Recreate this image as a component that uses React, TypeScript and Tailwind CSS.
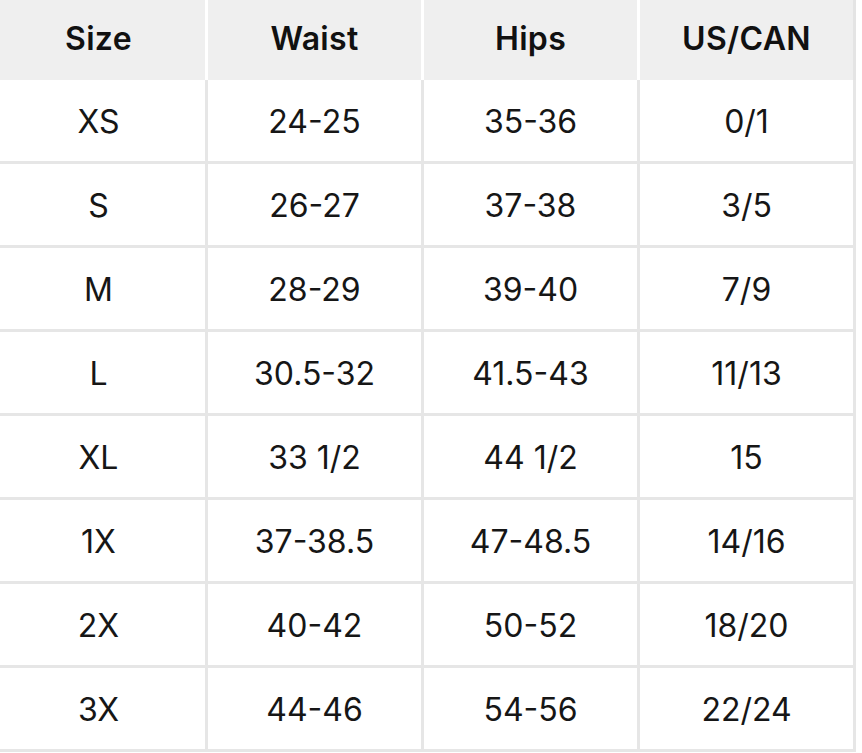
import React from 'react';

const headers = ['Size', 'Waist', 'Hips', 'US/CAN'];

const rows = [
  ['XS', '24-25', '35-36', '0/1'],
  ['S', '26-27', '37-38', '3/5'],
  ['M', '28-29', '39-40', '7/9'],
  ['L', '30.5-32', '41.5-43', '11/13'],
  ['XL', '33 1/2', '44 1/2', '15'],
  ['1X', '37-38.5', '47-48.5', '14/16'],
  ['2X', '40-42', '50-52', '18/20'],
  ['3X', '44-46', '54-56', '22/24'],
];

export default function App() {
  return (
    <div className="min-h-screen bg-white overflow-hidden" style={{ fontFamily: 'Inter, "Noto Sans", sans-serif' }}>
      <div className="-ml-[8px] w-[864px]">
        {/* header */}
        <div className="flex h-[80px] bg-[#efefef]">
          {headers.map((h, i) => (
            <div
              key={h}
              className={`w-[216px] flex items-center justify-center pb-[3px] border-r-[3px] text-[32px] font-semibold text-[#111] tracking-[0.01em] ${i === 3 ? 'border-[#e4e4e4]' : 'border-white'}`}
            >
              {h}
            </div>
          ))}
        </div>
        {/* body */}
        {rows.map((r) => (
          <div key={r[0]} className="flex h-[84px] border-b-[3px] border-[#e6e6e6]">
            {r.map((c, j) => (
              <div
                key={j}
                className="w-[216px] flex items-center justify-center pt-[2px] border-r-[3px] border-[#e6e6e6] text-[32px] text-[#161616]"
              >
                {c}
              </div>
            ))}
          </div>
        ))}
      </div>
    </div>
  );
}
